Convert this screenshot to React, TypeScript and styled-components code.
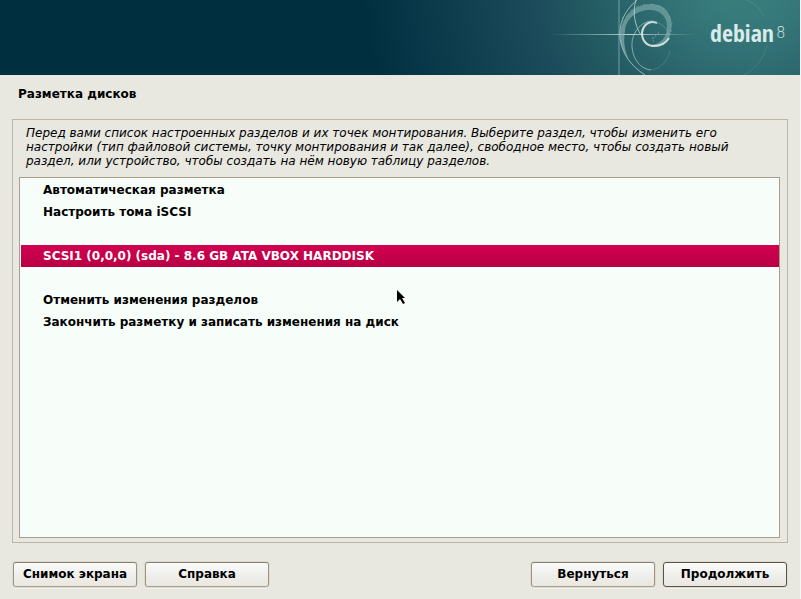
import React, { useState } from "react";
import styled, { createGlobalStyle } from "styled-components";

const GlobalStyle = createGlobalStyle`
  * { box-sizing: border-box; }
  body {
    margin: 0;
    background: #e8e7e0;
    color: #000;
    font-family: "DejaVu Sans", sans-serif;
    font-size: 12px;
  }
`;

const Screen = styled.div`
  display: flex;
  flex-direction: column;
  min-height: 100vh;
  border-right: 1px solid #f4f7f5;
`;

const Banner = styled.header`
  display: flex;
  justify-content: flex-end;
  height: 75px;
  overflow: hidden;
  background: radial-gradient(
    circle at calc(100% - 55px) -30px,
    #3b8480 0,
    #36787a 60px,
    #2b666c 120px,
    #225860 170px,
    #1b4a5a 220px,
    #10404f 285px,
    #073648 340px,
    #002f3f 385px
  );
`;

const Swirl = styled.svg`
  flex: none;
  width: 170px;
  height: 75px;
`;

const Brand = styled.div`
  position: relative;
  display: flex;
  gap: 2px;
  width: 90px;
  padding-top: 18px;
  color: #d8ebe8;
  line-height: 30px;
`;

const Halo = styled.svg`
  position: absolute;
  top: 0;
  left: 0;
  width: 90px;
  height: 75px;
`;

const BrandName = styled.span`
  font-family: "Liberation Sans Narrow", "Open Sans Condensed", Lato, sans-serif;
  font-size: 24px;
`;

const BrandVersion = styled.span`
  font-family: "DejaVu Sans Light", "DejaVu Sans", sans-serif;
  font-weight: 200;
  font-size: 15px;
`;

const Title = styled.h1`
  margin: 0;
  padding: 11px 18px 0;
  font-size: 12px;
  line-height: 16px;
`;

const Panel = styled.main`
  display: flex;
  flex: 1;
  flex-direction: column;
  margin: 17px 12px 0;
  padding: 6px 7px 4px 6px;
  border: 1px solid #bdb5a6;
`;

const Description = styled.p`
  margin: 0 0 9px;
  padding: 0 7px;
  font-size: 12px;
  font-style: italic;
  line-height: 14px;
`;

const PartitionList = styled.div`
  flex: 1;
  padding: 1px 0 1px 1px;
  border: 1px solid #a99d8b;
  background: #f7fdf9;
`;

const Row = styled.button<{ $selected: boolean }>`
  display: block;
  width: 100%;
  height: 22px;
  padding: 0 22px;
  border: 0;
  background: ${(p) => (p.$selected ? "linear-gradient(#d20050, #b80044)" : "transparent")};
  color: ${(p) => (p.$selected ? "#fff" : "#000")};
  font: bold 12px/22px "DejaVu Sans", sans-serif;
  text-align: left;
`;

const Spacer = styled.div`
  height: 22px;
`;

const Actions = styled.footer`
  display: flex;
  gap: 8px;
  padding: 19px 13px 12px;
`;

const Push = styled.span`
  flex: 1;
`;

const ActionButton = styled.button<{ $default?: boolean }>`
  width: 124px;
  height: 25px;
  padding: 0 0 2px;
  border: 1px solid;
  border-color: ${(p) => (p.$default ? "#5b5147" : "#887e6e #9f9484 #ab9f8f")};
  border-radius: 3px;
  background: linear-gradient(#fbfbfa, #efefec 50%, #e9e7e0);
  box-shadow: 0 0 0 1px #dedbd2, 0 1px 0 1px #f2f1ed;
  color: #000;
  font: bold 12px/20px "DejaVu Sans", sans-serif;
`;

const Pointer = styled.svg`
  position: absolute;
  left: 397px;
  top: 290px;
  width: 8px;
  height: 15px;
  pointer-events: none;
`;

const items = [
  "Автоматическая разметка",
  "Настроить тома iSCSI",
  "",
  "SCSI1 (0,0,0) (sda) - 8.6 GB ATA VBOX HARDDISK",
  "",
  "Отменить изменения разделов",
  "Закончить разметку и записать изменения на диск",
];

function SwirlArt() {
  return (
    <Swirl viewBox="540 0 170 75" fill="none" aria-hidden="true">
      <defs>
        <linearGradient id="beam" x1="550" x2="697" y1="0" y2="0" gradientUnits="userSpaceOnUse">
          <stop offset="0" stopColor="#b9d7d6" stopOpacity="0" />
          <stop offset="0.55" stopColor="#d5e7e5" stopOpacity="0.85" />
          <stop offset="1" stopColor="#b9d7d6" stopOpacity="0" />
        </linearGradient>
        <linearGradient id="ring" x1="625" x2="672" y1="60" y2="10" gradientUnits="userSpaceOnUse">
          <stop offset="0" stopColor="#9dbfc0" stopOpacity="0.6" />
          <stop offset="1" stopColor="#8db9b8" stopOpacity="0.5" />
        </linearGradient>
      </defs>
      <path d="M619 0V75" stroke="#8bb0b3" strokeOpacity="0.4" strokeWidth="2" />
      <rect x="550" y="34" width="147" height="1" fill="url(#beam)" />
      <path d="M637 0C623 12 619 25 620 38C622 54 631 66 645 75" stroke="#b3cfcf" strokeOpacity="0.8" />
      <path
        d="M629 59C619 48 617 29 626 17C634 5 650 2 661 6C669 10 673 20 671 30C669 41 662 47 652 47L651 45C661 44 667 37 667 27C667 16 660 10 650 10C637 10 626 18 625 31C623 42 625 52 629 59Z"
        fill="url(#ring)"
      />
      <path d="M626 17C633 5 646 3 656 5L664 9M669 16L672 22L671 31L668 40" stroke="#8eb6b7" strokeOpacity="0.5" strokeDasharray="3 1 1 2" />
      <path d="M636 0C632 12 635 26 641 35" stroke="#bcd5d3" strokeOpacity="0.8" />
      <path d="M657 23C649 20 643 25 642 33C642 41 647 46 654 46C661 46 666 43 669 38" stroke="#dfeae6" strokeOpacity="0.9" strokeWidth="2" />
      <path d="M653 21C640 21 631 34 632 47C633 60 641 69 651 70" stroke="#a9cbca" strokeOpacity="0.7" />
      <path d="M651 70C660 69 667 62 670 51" stroke="#82adae" strokeOpacity="0.3" />
      <path d="M655 22C663 24 668 29 669 36" stroke="#94b8b8" strokeOpacity="0.4" />
      <path d="M652 38h2M655 36h1M658 33h1M653 41h1M622 18h1" stroke="#b9d3d1" strokeOpacity="0.6" />
    </Swirl>
  );
}

export default function App() {
  const [selected, setSelected] = useState(3);
  return (
    <>
      <GlobalStyle />
      <Screen>
        <Banner>
          <SwirlArt />
          <Brand>
            <Halo viewBox="710 0 90 75" fill="none" aria-hidden="true">
              <path d="M746 0C756 4 761 10 764 17M767 45C764 57 757 68 744 75" stroke="#8fbcb8" strokeOpacity="0.2" />
            </Halo>
            <BrandName>debian</BrandName>
            <BrandVersion>8</BrandVersion>
          </Brand>
        </Banner>
        <Title>Разметка дисков</Title>
        <Panel>
          <Description>
            Перед вами список настроенных разделов и их точек монтирования. Выберите раздел, чтобы изменить его
            настройки (тип файловой системы, точку монтирования и так далее), свободное место, чтобы создать новый
            раздел, или устройство, чтобы создать на нём новую таблицу разделов.
          </Description>
          <PartitionList role="listbox" aria-label="Разметка дисков">
            {items.map((label, i) =>
              label ? (
                <Row
                  key={i}
                  type="button"
                  role="option"
                  aria-selected={i === selected}
                  $selected={i === selected}
                  onClick={() => setSelected(i)}
                >
                  {label}
                </Row>
              ) : (
                <Spacer key={i} />
              )
            )}
          </PartitionList>
        </Panel>
        <Actions>
          <ActionButton type="button">Снимок экрана</ActionButton>
          <ActionButton type="button">Справка</ActionButton>
          <Push />
          <ActionButton type="button">Вернуться</ActionButton>
          <ActionButton type="button" $default>Продолжить</ActionButton>
        </Actions>
      </Screen>
      <Pointer viewBox="0 0 8 15" aria-hidden="true">
        <path d="M0 0L8 8H5L8 13L6 14L3 9L0 12Z" fill="#000" />
      </Pointer>
    </>
  );
}
